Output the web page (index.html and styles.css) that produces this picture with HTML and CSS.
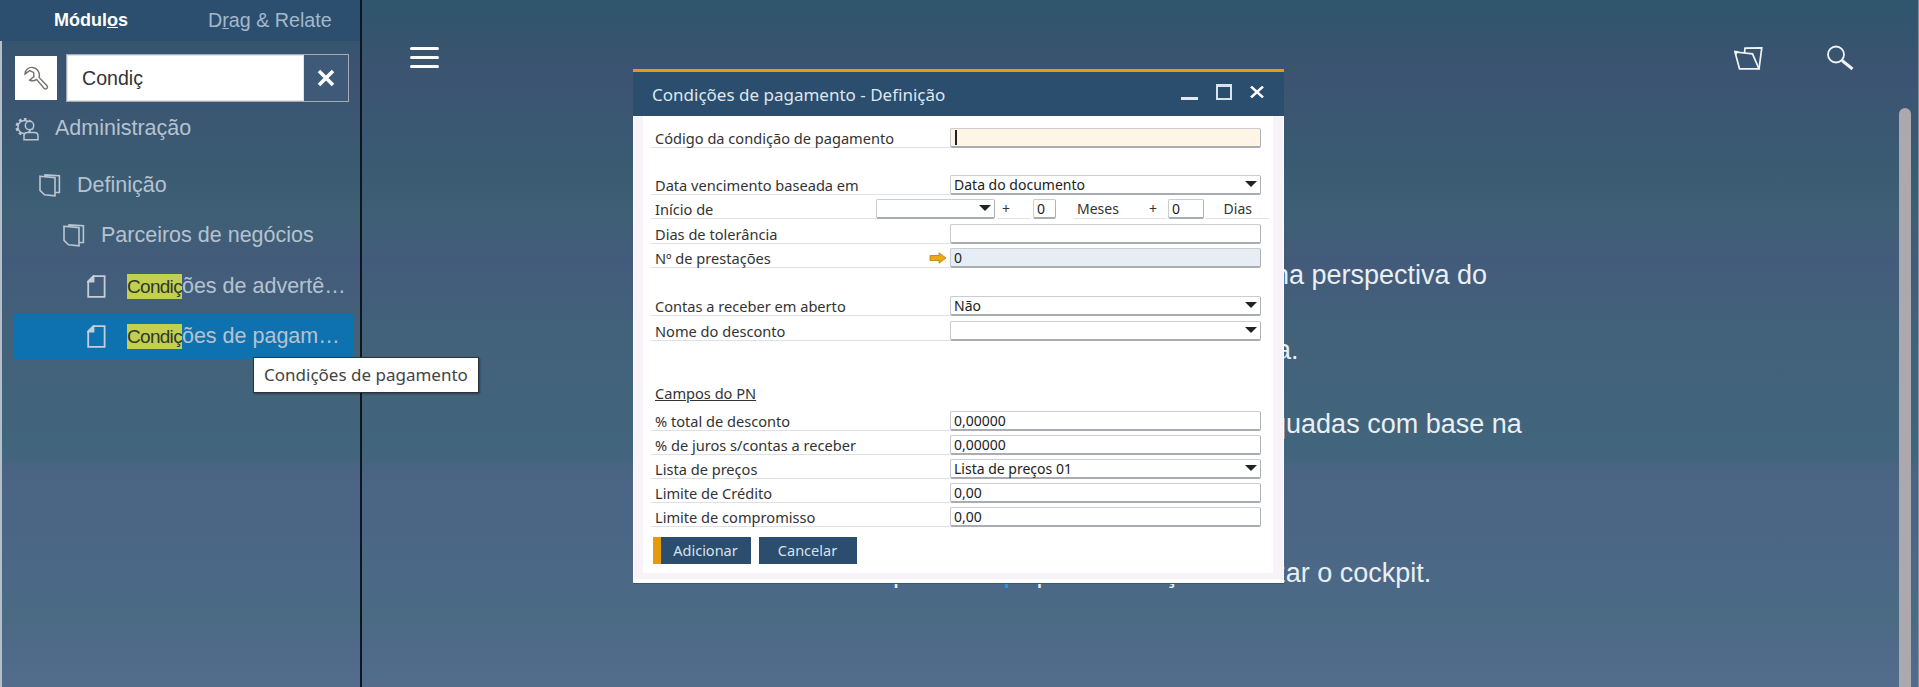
FILE: index.html
```html
<!DOCTYPE html>
<html lang="pt-BR">

<head>
    <meta charset="UTF-8">
    <meta name="viewport" content="width=device-width, initial-scale=1.0">
    <title>Condições de pagamento - Definição</title>
    <link rel="stylesheet" href="styles.css">
</head>

<body>
    <aside class="sidebar">
        <div class="tabs">
            <span class="tab tab-active">Módul<u>o</u>s</span>
            <span class="tab tab-dim">D<u>r</u>ag &amp; Relate</span>
        </div>

        <div class="search-row">
            <div class="tool-btn">
                <svg width="26" height="25" viewBox="0 0 26 25" fill="none" stroke="#77716c" stroke-width="1.4">
                    <path d="M10 1.5C6 .8 2.2 3.5 2 8L6.6 4.6 10.6 6.4 11 10.6 6.6 14C9 15.2 11.6 15 13.6 13.4L21 22.2C23 24 25.4 21.8 24 19.8L16 11.4C17.4 7 14.6 2.2 10 1.5Z" />
                </svg>
            </div>
            <div class="search-box">
                <span class="search-text">Condiç</span>
                <span class="search-clear">
                    <svg width="18" height="18" viewBox="0 0 18 18" stroke="#fff" stroke-width="3.6">
                        <path d="M2 2L16 16M16 2L2 16" />
                    </svg>
                </span>
            </div>
        </div>

        <ul class="tree">
            <li class="node node-root">
                <svg class="icon" width="24" height="24" viewBox="0 0 24 24" fill="none" stroke="#b9c6d3" stroke-width="1.5">
                    <circle cx="9.5" cy="10" r="7.6" stroke-width="3" stroke-dasharray="2.6 2.4" />
                    <circle cx="9.5" cy="10" r="6.6" />
                    <circle cx="14.5" cy="8.5" r="4.2" fill="#3d5a74" />
                    <path d="M9 22.8V19C9 17 10.4 15.6 12.5 15.6H19.5C21.6 15.6 23 17 23 19V22.8Z" fill="#3d5a74" />
                </svg>
                <span>Administração</span>
            </li>
            <li class="node node-def">
                <svg class="icon" width="22" height="23" viewBox="0 0 22 23" fill="none" stroke="#b9c6d3" stroke-width="1.6">
                    <path d="M1 2.2L16 3.6V21.8L5.5 20.8 1 16.4Z" />
                    <path d="M6 2.6V.9L20.4 1.8V18.5H16" />
                </svg>
                <span>Definição</span>
            </li>
            <li class="node node-partner">
                <svg class="icon" width="22" height="23" viewBox="0 0 22 23" fill="none" stroke="#b9c6d3" stroke-width="1.6">
                    <path d="M1 2.2L16 3.6V21.8L5.5 20.8 1 16.4Z" />
                    <path d="M6 2.6V.9L20.4 1.8V18.5H16" />
                </svg>
                <span>Parceiros de negócios</span>
            </li>
            <li class="node node-leaf">
                <svg class="icon" width="19" height="23" viewBox="0 0 19 23" fill="none" stroke="#c3ced9" stroke-width="1.8">
                    <path d="M1.2 6.5L6.5 1.2H17.6V21.8H1.2Z" />
                    <path d="M1.2 6.5H6.5V1.2Z" fill="#c3ced9" />
                </svg>
                <span class="node-text"><mark class="hit">Condiç</mark>ões de advertê…</span>
            </li>
            <li class="node node-leaf node-selected">
                <svg class="icon" width="19" height="23" viewBox="0 0 19 23" fill="none" stroke="#c3ced9" stroke-width="1.8">
                    <path d="M1.2 6.5L6.5 1.2H17.6V21.8H1.2Z" />
                    <path d="M1.2 6.5H6.5V1.2Z" fill="#c3ced9" />
                </svg>
                <span class="node-text"><mark class="hit">Condiç</mark>ões de pagam…</span>
            </li>
        </ul>
    </aside>

    <div class="tooltip">Condições de pagamento</div>

    <main class="main">
        <header class="topbar">
            <div class="burger"><i></i><i></i><i></i></div>
            <div class="top-icons">
                <svg class="icon-folder" width="29" height="23" viewBox="0 0 29 23" fill="none" stroke="#f1f4f6" stroke-width="1.7">
                    <path d="M1 5L18.5 6.8 25 21.8H5.5Z" />
                    <path d="M10.5 5.8L11 1.2 27.8 .8 25 21.8" />
                    <path d="M0 3.6L5 4.2 2 8Z" fill="#f1f4f6" stroke="none" />
                </svg>
                <svg width="27" height="25" viewBox="0 0 27 25" fill="none" stroke="#f1f4f6">
                    <circle cx="9" cy="9.5" r="8" stroke-width="1.8" />
                    <path d="M15 15.5L25.5 24" stroke-width="3" />
                </svg>
            </div>
        </header>

        <div class="guide">
            <p class="guide-line line-a">na perspectiva do</p>
            <p class="guide-line line-b">empresa.</p>
            <p class="guide-line line-c">adequadas com base na</p>
            <p class="guide-line line-d">Aperte em<span class="caret"></span>para começar a utilizar o cockpit.</p>
        </div>

        <div class="scroll-thumb"></div>
    </main>

    <section class="dialog">
        <div class="dialog-head">
            <span class="dialog-title">Condições de pagamento - Definição</span>
            <div class="win-btns">
                <span class="win-min"></span>
                <span class="win-max"></span>
                <svg width="14" height="12" viewBox="0 0 14 12" stroke="#fff" stroke-width="2.4">
                    <path d="M1 0.5L13 11.5M13 0.5L1 11.5" />
                </svg>
            </div>
        </div>

        <div class="dialog-body">
            <form class="form">
                <div class="row">
                    <label class="lbl">Código da condição de pagamento</label>
                    <div class="field field-key"><span class="text-cursor"></span></div>
                </div>

                <div class="group group-top">
                    <div class="row">
                        <label class="lbl">Data vencimento baseada em</label>
                        <div class="field field-select">Data do documento</div>
                    </div>
                    <div class="row">
                        <label class="lbl lbl-start">Início de</label>
                        <div class="field field-select field-start"></div>
                        <span class="cell cell-plus">+</span>
                        <div class="field field-num">0</div>
                        <span class="cell cell-months"><span>Meses</span><span>+</span></span>
                        <div class="field field-num2">0</div>
                        <span class="cell cell-days">Dias</span>
                    </div>
                    <div class="row">
                        <label class="lbl">Dias de tolerância</label>
                        <div class="field"></div>
                    </div>
                    <div class="row">
                        <label class="lbl lbl-link">Nº de prestações
                            <svg width="18" height="12" viewBox="0 0 18 12" fill="#eca80f" stroke="#b57f0a" stroke-width="0.8">
                                <path d="M1 3.5H10V0.8L17 6 10 11.2V8.5H1Z" />
                            </svg>
                        </label>
                        <div class="field field-locked">0</div>
                    </div>
                </div>

                <div class="group group-mid">
                    <div class="row">
                        <label class="lbl">Contas a receber em aberto</label>
                        <div class="field field-select">Não</div>
                    </div>
                    <div class="row">
                        <label class="lbl">Nome do desconto</label>
                        <div class="field field-select"></div>
                    </div>
                </div>

                <div class="section-title"><u>Campos do PN</u></div>

                <div class="group group-tight">
                    <div class="row">
                        <label class="lbl">% total de desconto</label>
                        <div class="field">0,00000</div>
                    </div>
                    <div class="row">
                        <label class="lbl">% de juros s/contas a receber</label>
                        <div class="field">0,00000</div>
                    </div>
                    <div class="row">
                        <label class="lbl">Lista de preços</label>
                        <div class="field field-select">Lista de preços 01</div>
                    </div>
                    <div class="row">
                        <label class="lbl">Limite de Crédito</label>
                        <div class="field">0,00</div>
                    </div>
                    <div class="row">
                        <label class="lbl">Limite de compromisso</label>
                        <div class="field">0,00</div>
                    </div>
                </div>

                <div class="actions">
                    <button type="button" class="btn btn-primary">Adicionar</button>
                    <button type="button" class="btn">Cancelar</button>
                </div>
            </form>
        </div>
    </section>
</body>

</html>
```

FILE: styles.css
```css
* {
    box-sizing: border-box;
}

html,
body {
    height: 687px;
    margin: 0;
    overflow: hidden;
}

body {
    display: flex;
    position: relative;
    font-family: "Liberation Sans", Arial, sans-serif;
    background: linear-gradient(180deg,
            #2f566c 0,
            #38546f 50px,
            #3c5472 80px,
            #3a5a72 160px,
            #3f5f75 220px,
            #435b7b 262px,
            #42627a 335px,
            #41657c 450px,
            #4b6484 475px,
            #4b6986 590px,
            #4a6b82 615px,
            #4e6a88 640px,
            #536c8c 687px);
}

/* sidebar */
.sidebar {
    width: 362px;
    flex: none;
    border-left: 2px solid #b5bfca;
    border-right: 2px solid #10161c;
}

.tabs {
    display: flex;
    height: 41px;
    margin-left: -2px;
    align-items: center;
    background: #2c4f70;
}

.tab-active {
    margin-left: 54px;
    color: #fff;
    font-weight: bold;
    font-size: 18px;
}

.tab-dim {
    margin-left: 80px;
    color: #a4b8cb;
    font-size: 19.7px;
}

.search-row {
    display: flex;
    align-items: center;
    gap: 9px;
    height: 48px;
    margin: 13px 0 0 13px;
}

.tool-btn {
    display: flex;
    align-items: center;
    justify-content: center;
    width: 42px;
    height: 44px;
    background: #fff;
}

.search-box {
    display: flex;
    width: 283px;
    height: 48px;
    border: 1px solid #a3abb3;
}

.search-text {
    flex: 1;
    padding-left: 14px;
    background: #fff;
    border: 1px solid #e4e4e4;
    color: #333;
    font-size: 19.6px;
    line-height: 44px;
}

.search-clear {
    display: flex;
    align-items: center;
    justify-content: center;
    width: 44px;
    background: #3e5a78;
}

.tree {
    margin: 0;
    padding: 4px 0 0;
    list-style: none;
    color: #b5c2d0;
    font-size: 21.5px;
}

.node {
    display: flex;
    align-items: center;
    height: 45px;
    margin: 0 6px 5.2px 12px;
}

.node-root {
    margin-bottom: 12.2px;
    padding-left: 1px;
}

.node-def {
    padding-left: 25px;
}

.node-partner {
    padding-left: 49px;
}

.node-leaf {
    padding-left: 73px;
}

.node .icon {
    flex: none;
    margin-right: 16px;
}

.node-leaf .icon {
    margin-right: 21px;
}

.node-text {
    white-space: nowrap;
}

.node-selected {
    background: #0f72b0;
}

/* the match is drawn tighter than the rest of the label */
.hit {
    padding: 2px 0;
    background: #c3cf4e;
    color: #2d3a2a;
    font-size: 19px;
    letter-spacing: -0.7px;
}

.tooltip {
    position: absolute;
    left: 253px;
    top: 357px;
    z-index: 3;
    padding: 0 10px;
    background: #fff;
    border: 1px solid #2e3338;
    box-shadow: 1px 1px 2px rgba(0, 0, 0, 0.35);
    color: #444;
    font-family: "Noto Sans", sans-serif;
    font-size: 17px;
    line-height: 34px;
    white-space: nowrap;
}

/* main area behind the dialog */
.main {
    position: relative;
    flex: 1;
    min-width: 0;
    border-right: 1px solid #7d92a6;
}

.topbar {
    display: flex;
    justify-content: space-between;
    padding: 45px 64px 0 48px;
}

.burger {
    display: flex;
    flex-direction: column;
    gap: 6px;
    width: 29px;
    padding-top: 2px;
}

.burger i {
    height: 3px;
    border-radius: 2px;
    background: #fff;
}

.top-icons {
    display: flex;
    gap: 64px;
}

.icon-folder {
    margin-top: 2px;
}

.guide {
    padding-top: 190px;
    color: #e9eff3;
    font-size: 27px;
    line-height: 31px;
    white-space: nowrap;
}

.guide-line {
    margin: 0;
}

.line-a {
    margin-left: 912px;
}

.line-b {
    margin: 44px 0 0 824px;
}

.line-c {
    margin: 43px 0 0 864px;
}

.line-d {
    margin: 118px 0 0 513px;
}

.caret {
    display: inline-block;
    width: 3px;
    height: 26px;
    margin: 0 29px 0 5px;
    vertical-align: -6px;
    background: #0ea0e6;
}

.scroll-thumb {
    position: absolute;
    right: 7px;
    top: 108px;
    bottom: 0;
    width: 12px;
    border-radius: 6px 6px 0 0;
    background: #aba9ad;
}

/* dialog window */
.dialog {
    position: absolute;
    left: 633px;
    top: 69px;
    z-index: 2;
    width: 651px;
    height: 515px;
    border-top: 3px solid #e59c0c;
    border-bottom: 1px solid #3a5876;
    display: flex;
    flex-direction: column;
}

.dialog-head {
    display: flex;
    flex: none;
    align-items: center;
    justify-content: space-between;
    height: 44px;
    padding: 0 20px 0 19px;
    background: #2b4d6e;
    color: #dfe7ef;
    font-family: "Noto Sans", sans-serif;
    font-size: 17px;
}

.dialog-title {
    padding-top: 1px;
}

.win-btns {
    display: flex;
    align-items: center;
    gap: 18px;
    margin-top: -5px;
}

.win-min {
    width: 17px;
    height: 3px;
    margin-top: 13px;
    background: #e4eaf0;
}

.win-max {
    width: 16px;
    height: 16px;
    border: 2px solid #dbe3ea;
    border-top-width: 3px;
}

.dialog-body {
    flex: 1;
    padding: 0 10px 6px 9px;
    background: #f7f3f9;
    border: 1px solid #fff;
    border-width: 0 1px 4px 1px;
}

.form {
    height: 100%;
    padding: 12px 0 0 8px;
    background: #fff;
    color: #333;
    font-family: "Noto Sans", sans-serif;
    font-size: 14px;
}

.row {
    display: flex;
    height: 20px;
}

.lbl {
    display: flex;
    align-items: flex-end;
    justify-content: space-between;
    width: 299px;
    padding: 0 3px 0 4px;
    border-bottom: 1px solid #dde1e5;
    font-size: 14.6px;
    line-height: 17px;
}

.lbl-start {
    width: 225px;
}

.lbl-link svg {
    margin-bottom: 3px;
}

.field {
    position: relative;
    width: 311px;
    padding-left: 3px;
    background: #fff;
    border: 1px solid #c9cdd1;
    border-right-color: #aeb2b6;
    border-bottom: 2px solid #a9adb1;
    border-radius: 2px;
    color: #222;
    line-height: 17px;
}

.field-key {
    background: #fff5e6;
}

.text-cursor {
    display: block;
    width: 2px;
    height: 15px;
    margin: 1px 0 0 1px;
    background: #222;
}

.field-locked {
    background: #e6edf5;
}

.field-select::after {
    content: "";
    position: absolute;
    right: 3px;
    top: 5px;
    border: 6px solid transparent;
    border-top: 6px solid #222;
    border-bottom: 0;
}

.field-start {
    width: 119px;
}

.field-num {
    width: 23px;
}

.field-num2 {
    width: 36px;
}

.cell {
    display: flex;
    align-items: flex-end;
    justify-content: space-between;
    border-bottom: 1px solid #dde1e5;
    line-height: 18px;
}

.cell-plus {
    width: 32px;
    margin: 0 3px;
    padding-left: 4px;
}

.cell-months {
    width: 92px;
    margin: 0 2px 0 18px;
    padding: 0 9px 0 3px;
}

.cell-days {
    justify-content: flex-end;
    width: 63px;
    margin-left: 2px;
    padding-right: 17px;
}

.group {
    display: flex;
    flex-direction: column;
    gap: 4.4px;
}

.group-top {
    margin-top: 27px;
}

.group-mid {
    margin-top: 28px;
}

.section-title {
    height: 20px;
    margin: 42px 0 8px;
    padding-left: 4px;
    font-size: 14.6px;
    line-height: 20px;
}

.group-tight {
    gap: 4px;
}

.actions {
    display: flex;
    gap: 8px;
    margin: 10px 0 0 1.5px;
}

.btn {
    width: 98px;
    height: 27px;
    padding: 0;
    background: #2b4d6e;
    border: 0;
    color: #d8e1ea;
    font: inherit;
    font-size: 14.5px;
}

.btn-primary {
    border-left: 8px solid #e59c0c;
}
```
